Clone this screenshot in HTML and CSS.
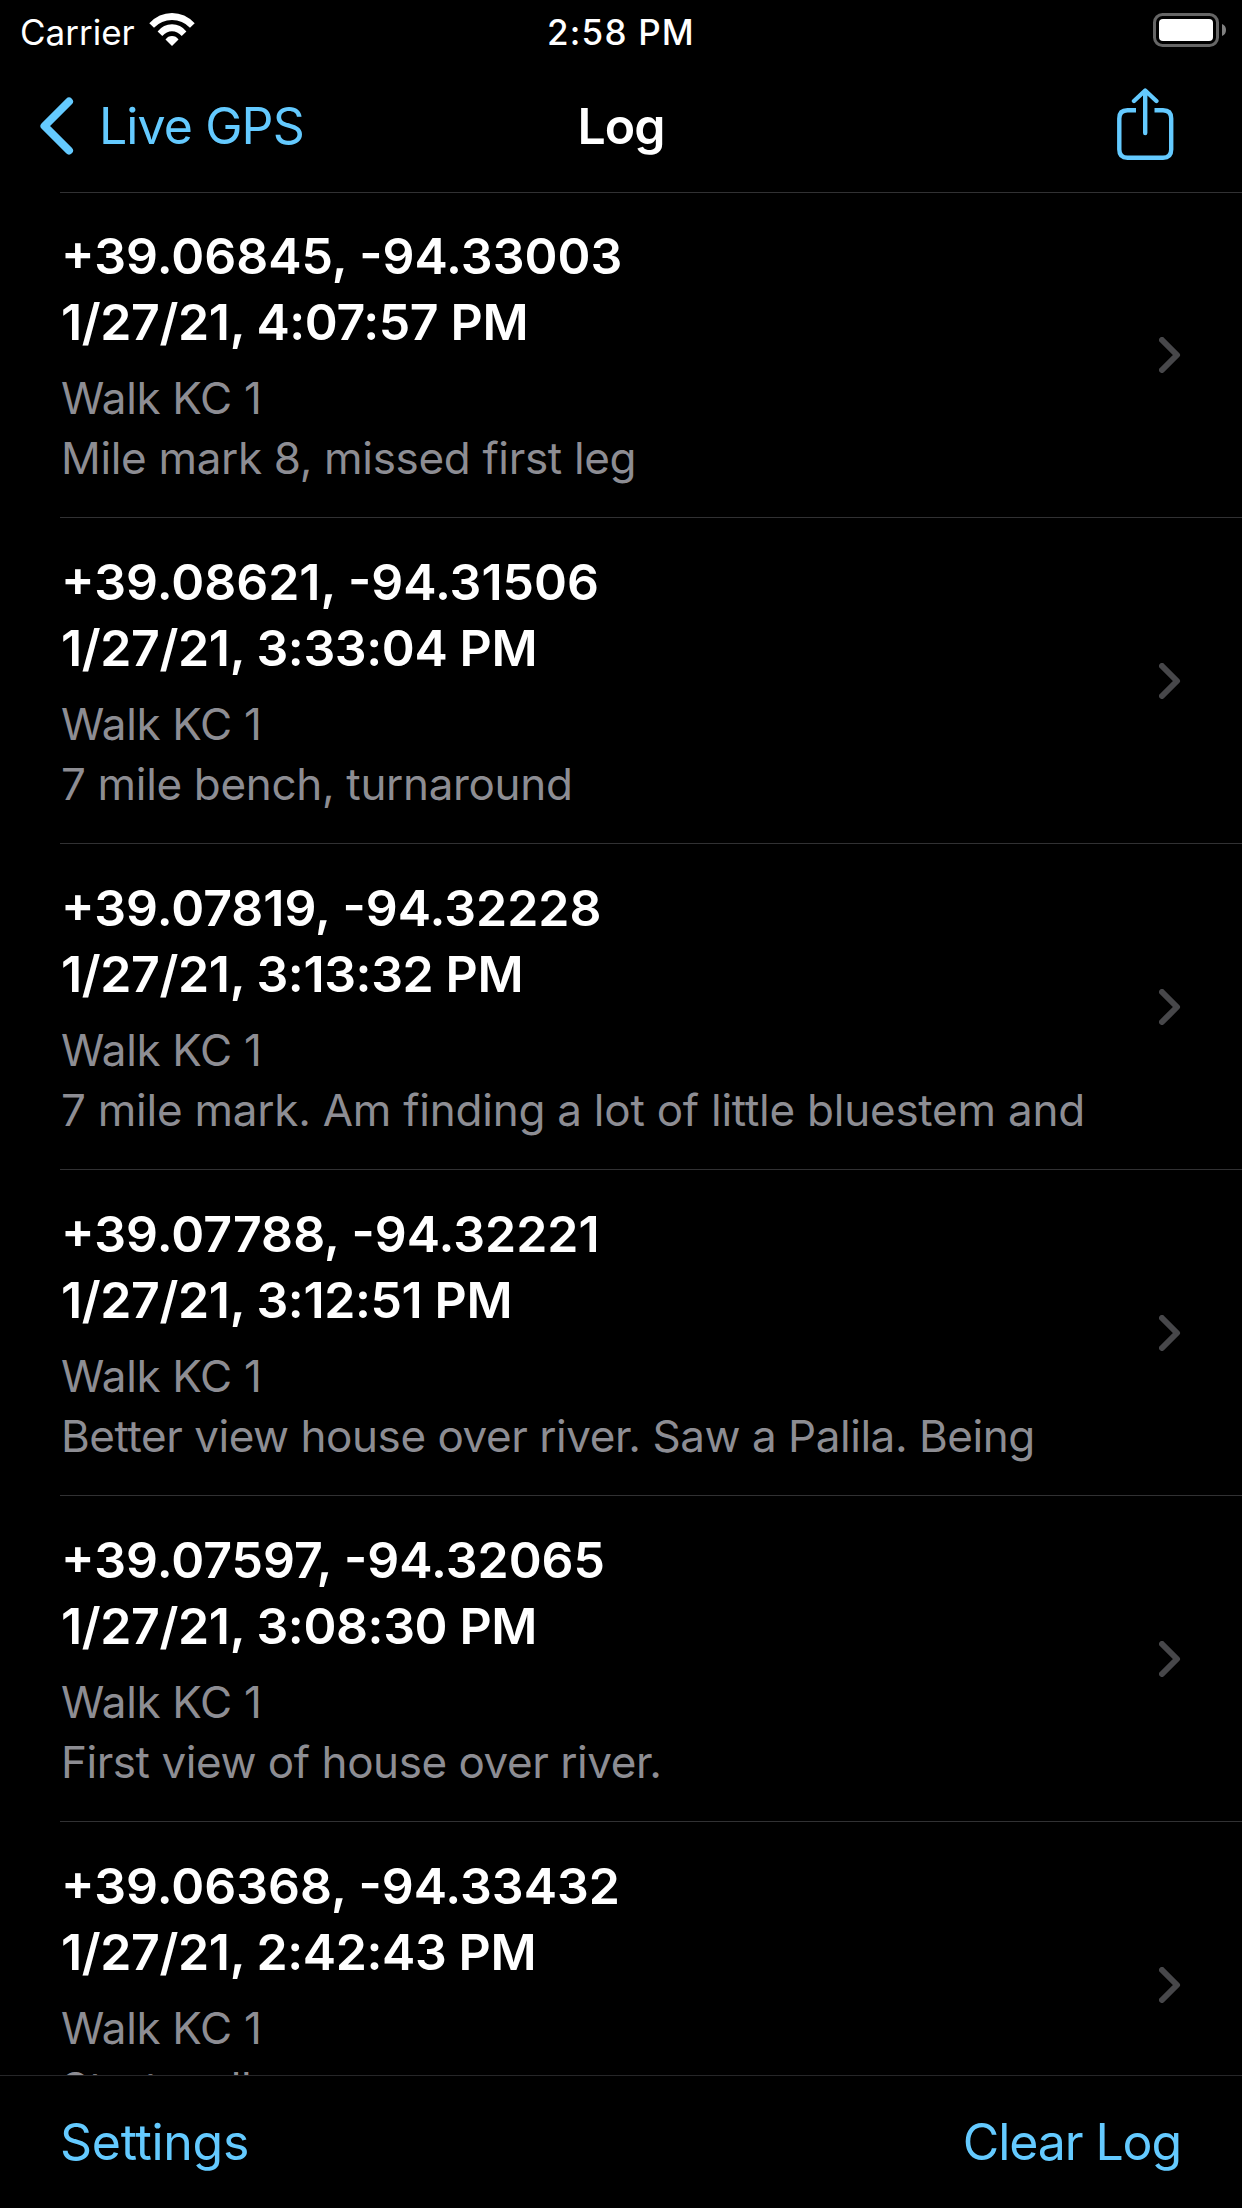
FILE: index.html
```html
<!DOCTYPE html>
<html lang="en">
  <head>
    <meta charset="UTF-8" />
    <meta name="viewport" content="width=device-width, initial-scale=1" />
    <title>Live GPS - Log</title>
    <link rel="stylesheet" href="styles.css">
  </head>
  <body>
    <header class="status-bar">
      <div class="carrier">
        <span class="carrier-name">Carrier</span>
        <svg class="wifi" width="46" height="34" viewBox="149 13 46 34" fill="#fff">
          <path d="M149.3 23.2 Q159 13 172 13 Q185 13 194.7 23.2 L190 27.7 Q182.5 20 172 20 Q161.5 20 154 27.7 Z" />
          <path d="M157.6 31.4 Q163.5 24.3 172 24.3 Q180.5 24.3 186.4 31.4 L181.7 36 Q177.5 31.3 172 31.3 Q166.5 31.3 162.3 36 Z" />
          <path d="M165.5 39.4 Q168 36 172 36 Q176 36 178.5 39.4 L172 46 Z" />
        </svg>
      </div>
      <div class="time">2:58 PM</div>
      <svg class="battery" width="74" height="34" viewBox="0 0 74 34">
        <rect x="1.5" y="1.5" width="63" height="31" rx="8" fill="none" stroke="#666" stroke-width="3" />
        <rect x="6" y="6" width="54" height="22" rx="4" fill="#fff" />
        <path d="M69 11 Q73 12.5 73 17 Q73 21.5 69 23 Z" fill="#808080" />
      </svg>
    </header>

    <nav class="nav-bar">
      <a class="back" href="#">
        <svg width="34" height="58" viewBox="0 0 34 58">
          <path d="M29 4.5 L4.5 29 L29 53.5" />
        </svg>
        <span class="back-label">Live GPS</span>
      </a>
      <h1>Log</h1>
      <a class="share" href="#" aria-label="Share">
        <svg width="57" height="72" viewBox="0 0 57 72">
          <path class="box" d="M19 22.3 H10.5 Q2.3 22.3 2.3 30.5 V61.5 Q2.3 69.7 10.5 69.7 H46 Q54.2 69.7 54.2 61.5 V30.5 Q54.2 22.3 46 22.3 H37.5" />
          <path class="arrow" d="M28.2 3 V45 M17 13 L28.2 2.5 L39.4 13" />
        </svg>
      </a>
    </nav>

    <main class="log">
      <a class="entry" href="#">
        <div class="entry-text">
          <p class="title">+39.06845, -94.33003</p>
          <p class="title date">1/27/21, 4:07:57 PM</p>
          <p class="note first-note">Walk KC 1</p>
          <p class="note">Mile mark 8, missed first leg</p>
        </div>
        <svg class="chevron" viewBox="0 0 22 36"><path d="M3 3 L18 18 L3 33" /></svg>
      </a>
      <a class="entry" href="#">
        <div class="entry-text">
          <p class="title">+39.08621, -94.31506</p>
          <p class="title date">1/27/21, 3:33:04 PM</p>
          <p class="note first-note">Walk KC 1</p>
          <p class="note">7 mile bench, turnaround</p>
        </div>
        <svg class="chevron" viewBox="0 0 22 36"><path d="M3 3 L18 18 L3 33" /></svg>
      </a>
      <a class="entry" href="#">
        <div class="entry-text">
          <p class="title">+39.07819, -94.32228</p>
          <p class="title date">1/27/21, 3:13:32 PM</p>
          <p class="note first-note">Walk KC 1</p>
          <p class="note loose">7 mile mark. Am finding a lot of little bluestem and</p>
        </div>
        <svg class="chevron" viewBox="0 0 22 36"><path d="M3 3 L18 18 L3 33" /></svg>
      </a>
      <a class="entry" href="#">
        <div class="entry-text">
          <p class="title">+39.07788, -94.32221</p>
          <p class="title date">1/27/21, 3:12:51 PM</p>
          <p class="note first-note">Walk KC 1</p>
          <p class="note tight">Better view house over river. Saw a Palila. Being</p>
        </div>
        <svg class="chevron" viewBox="0 0 22 36"><path d="M3 3 L18 18 L3 33" /></svg>
      </a>
      <a class="entry" href="#">
        <div class="entry-text">
          <p class="title">+39.07597, -94.32065</p>
          <p class="title date">1/27/21, 3:08:30 PM</p>
          <p class="note first-note">Walk KC 1</p>
          <p class="note tight">First view of house over river.</p>
        </div>
        <svg class="chevron" viewBox="0 0 22 36"><path d="M3 3 L18 18 L3 33" /></svg>
      </a>
      <a class="entry" href="#">
        <div class="entry-text">
          <p class="title">+39.06368, -94.33432</p>
          <p class="title date">1/27/21, 2:42:43 PM</p>
          <p class="note first-note">Walk KC 1</p>
          <p class="note">Start walk</p>
        </div>
        <svg class="chevron" viewBox="0 0 22 36"><path d="M3 3 L18 18 L3 33" /></svg>
      </a>
    </main>

    <footer class="toolbar">
      <a class="settings" href="#">Settings</a>
      <a class="clear" href="#">Clear Log</a>
    </footer>
  </body>
</html>
```

FILE: styles.css
```css
* {
  box-sizing: border-box;
}

body {
  margin: 0;
  width: 1242px;
  height: 2208px;
  display: flex;
  flex-direction: column;
  overflow: hidden;
  background: #000;
  color: #fff;
  font-family: Inter, "Liberation Sans", sans-serif;
}

a {
  color: #64caff;
  text-decoration: none;
}

svg {
  display: block;
  flex: none;
}

h1,
p {
  margin: 0;
}

/* Status bar */
.status-bar {
  display: grid;
  grid-template-columns: 1fr auto 1fr;
  align-items: center;
  height: 60px;
  padding: 0 15px;
  font-size: 35px;
  line-height: 56px;
}

.carrier {
  display: flex;
  align-items: center;
  padding-left: 5px;
}

.carrier-name {
  width: 129px;
  padding-top: 3px;
}

.time {
  padding-top: 3px;
  font-weight: 500;
  letter-spacing: 1.2px;
}

.battery {
  justify-self: end;
}

/* Navigation bar */
.nav-bar {
  display: grid;
  grid-template-columns: 1fr auto 1fr;
  align-items: center;
  height: 132px;
  padding: 0 40px;
  font-size: 50px;
}

.back {
  display: flex;
  align-items: center;
  gap: 25px;
  letter-spacing: -0.9px;
}

.back path {
  fill: none;
  stroke: #64caff;
  stroke-width: 8;
  stroke-linecap: round;
  stroke-linejoin: round;
}

.nav-bar h1 {
  font-size: 50px;
  font-weight: 600;
  letter-spacing: -1px;
}

.share {
  justify-self: end;
  margin: 0 28px 4px 0;
}

.share path {
  fill: none;
  stroke: #64caff;
  stroke-width: 4.4;
}

.share .arrow {
  stroke-linecap: round;
  stroke-linejoin: round;
}

/* Log entries */
.log {
  flex: 1;
  min-height: 0;
  overflow: hidden;
}

.entry {
  display: flex;
  justify-content: space-between;
  align-items: center;
  height: 326px;
  margin-left: 60px;
  padding-right: 61px;
  border-bottom: 1px solid #313133;
}

.entry:first-child {
  border-top: 1px solid #313133;
}

.entry-text {
  padding: 2px 0 0 1px;
  white-space: nowrap;
}

.entry:first-child .entry-text {
  padding-top: 1px;
}

.title {
  color: #fff;
  font-size: 50px;
  font-weight: 600;
  line-height: 66px;
}

.date {
  letter-spacing: -0.38px;
}

.note {
  color: #8d8d93;
  font-size: 44px;
  line-height: 60px;
  letter-spacing: -0.33px;
}

.note.loose {
  letter-spacing: -0.24px;
}

.note.tight {
  letter-spacing: -0.45px;
}

.first-note {
  margin-top: 13px;
}

.chevron {
  width: 22px;
  height: 36px;
}

.chevron path {
  fill: none;
  stroke: #47474a;
  stroke-width: 6;
  stroke-linecap: round;
  stroke-linejoin: round;
}

/* Bottom toolbar */
.toolbar {
  display: flex;
  justify-content: space-between;
  height: 133px;
  padding: 0 61px 0 60px;
  border-top: 1px solid #262628;
  font-size: 50px;
  line-height: 132px;
}

.settings {
  letter-spacing: -0.3px;
}

.clear {
  letter-spacing: -1.1px;
}
```
